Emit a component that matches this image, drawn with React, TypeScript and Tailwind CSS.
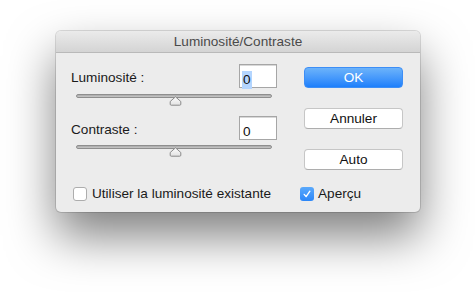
import React from "react";

const font = { fontFamily: '"Liberation Sans", Arial, sans-serif' };

function Thumb() {
  return (
    <svg width="13" height="10" viewBox="0 0 13 10" className="absolute left-[98px] top-[2px]">
      <defs>
        <linearGradient id="tg" x1="0" y1="0" x2="0" y2="1">
          <stop offset="0" stopColor="#fdfdfd" />
          <stop offset="1" stopColor="#e2e2e2" />
        </linearGradient>
      </defs>
      <path d="M6.5 0.8 L11.8 5.5 L11.8 8.2 Q11.8 9.2 10.8 9.2 L2.2 9.2 Q1.2 9.2 1.2 8.2 L1.2 5.5 Z" fill="url(#tg)" stroke="#8a8a8a" strokeWidth="1" />
    </svg>
  );
}

function Slider() {
  return (
    <div className="relative h-[22px] w-[206px]">
      <div className="absolute left-[5px] top-[0px] h-[4px] w-[196px] rounded-full border border-[#8e8e8e] bg-gradient-to-b from-[#a9a9a9] to-[#c8c8c8]" />
      <Thumb />
    </div>
  );
}

function Field({ label, selected }: { label: string; selected?: boolean }) {
  return (
    <div className="flex h-[24px] w-[206px] items-start justify-between">
      <span className="mt-[6px] text-[13.6px] leading-[16px] text-[#1a1a1a]">{label}</span>
      <div className="h-[24px] w-[38px] border border-[#a6a6a6] bg-white pl-[2px] pt-[2px] shadow-[inset_0_1px_0_#d8d8d8]">
        <span className={`inline-block h-[18px] px-[1px] text-[13.6px] leading-[18px] text-[#111] ${selected ? "bg-[#b4d5fe]" : ""}`}>0</span>
      </div>
    </div>
  );
}

function Button({ children, primary }: { children: React.ReactNode; primary?: boolean }) {
  if (primary) {
    return (
      <div className="flex h-[21px] w-[99px] items-center justify-center rounded-[4px] border border-[#3d8ef6] bg-gradient-to-b from-[#6cb3fa] to-[#1c7ffb] text-[13.6px] leading-[16px] text-white">
        {children}
      </div>
    );
  }
  return (
    <div className="flex h-[21px] w-[99px] items-center justify-center rounded-[4px] border border-[#c6c6c6] border-b-[#adadad] bg-white text-[13.6px] leading-[16px] text-[#111]">
      {children}
    </div>
  );
}

export default function App() {
  return (
    <div className="h-[292px] w-[475px] overflow-hidden bg-white pl-[56px] pt-[31px]" style={font}>
      <div className="h-[181px] w-[364px] rounded-[5px] bg-[#ececec] shadow-[0_0_0_1px_rgba(0,0,0,0.13),0_24px_48px_rgba(0,0,0,0.5)]">
        <div className="flex h-[22px] items-center justify-center rounded-t-[5px] border-b border-[#b9b9b9] bg-gradient-to-b from-[#ebebeb] to-[#d4d4d4] text-[13.6px] leading-[16px] text-[#4a4a4a]">
          Luminosité/Contraste
        </div>
        <div className="flex pl-[15px] pt-[11px]">
          <div className="flex w-[206px] flex-col">
            <Field label="Luminosité :" selected />
            <div className="mt-[6px]">
              <Slider />
            </div>
            <Field label="Contraste :" />
            <div className="mt-[5px]">
              <Slider />
            </div>
          </div>
          <div className="ml-[27px] flex flex-col pt-[3px]">
            <Button primary>OK</Button>
            <div className="mt-[20px]">
              <Button>Annuler</Button>
            </div>
            <div className="mt-[20px]">
              <Button>Auto</Button>
            </div>
          </div>
        </div>
        <div className="mt-[16px] flex items-center pl-[17px] text-[13.6px] leading-[16px] text-[#1a1a1a]">
          <div className="flex w-[227px] items-center">
            <div className="h-[14px] w-[14px] rounded-[3px] border border-[#adadad] bg-white" />
            <span className="ml-[5px]">Utiliser la luminosité existante</span>
          </div>
          <div className="flex items-center">
            <div className="flex h-[14px] w-[14px] items-center justify-center rounded-[3px] bg-gradient-to-b from-[#5aa9fb] to-[#2b86f8]">
              <svg width="10" height="10" viewBox="0 0 10 10">
                <path d="M2.2 5.4 L4.1 7.6 L7.9 2.2" fill="none" stroke="white" strokeWidth="1.4" strokeLinecap="round" strokeLinejoin="round" />
              </svg>
            </div>
            <span className="ml-[4px]">Aperçu</span>
          </div>
        </div>
      </div>
    </div>
  );
}
